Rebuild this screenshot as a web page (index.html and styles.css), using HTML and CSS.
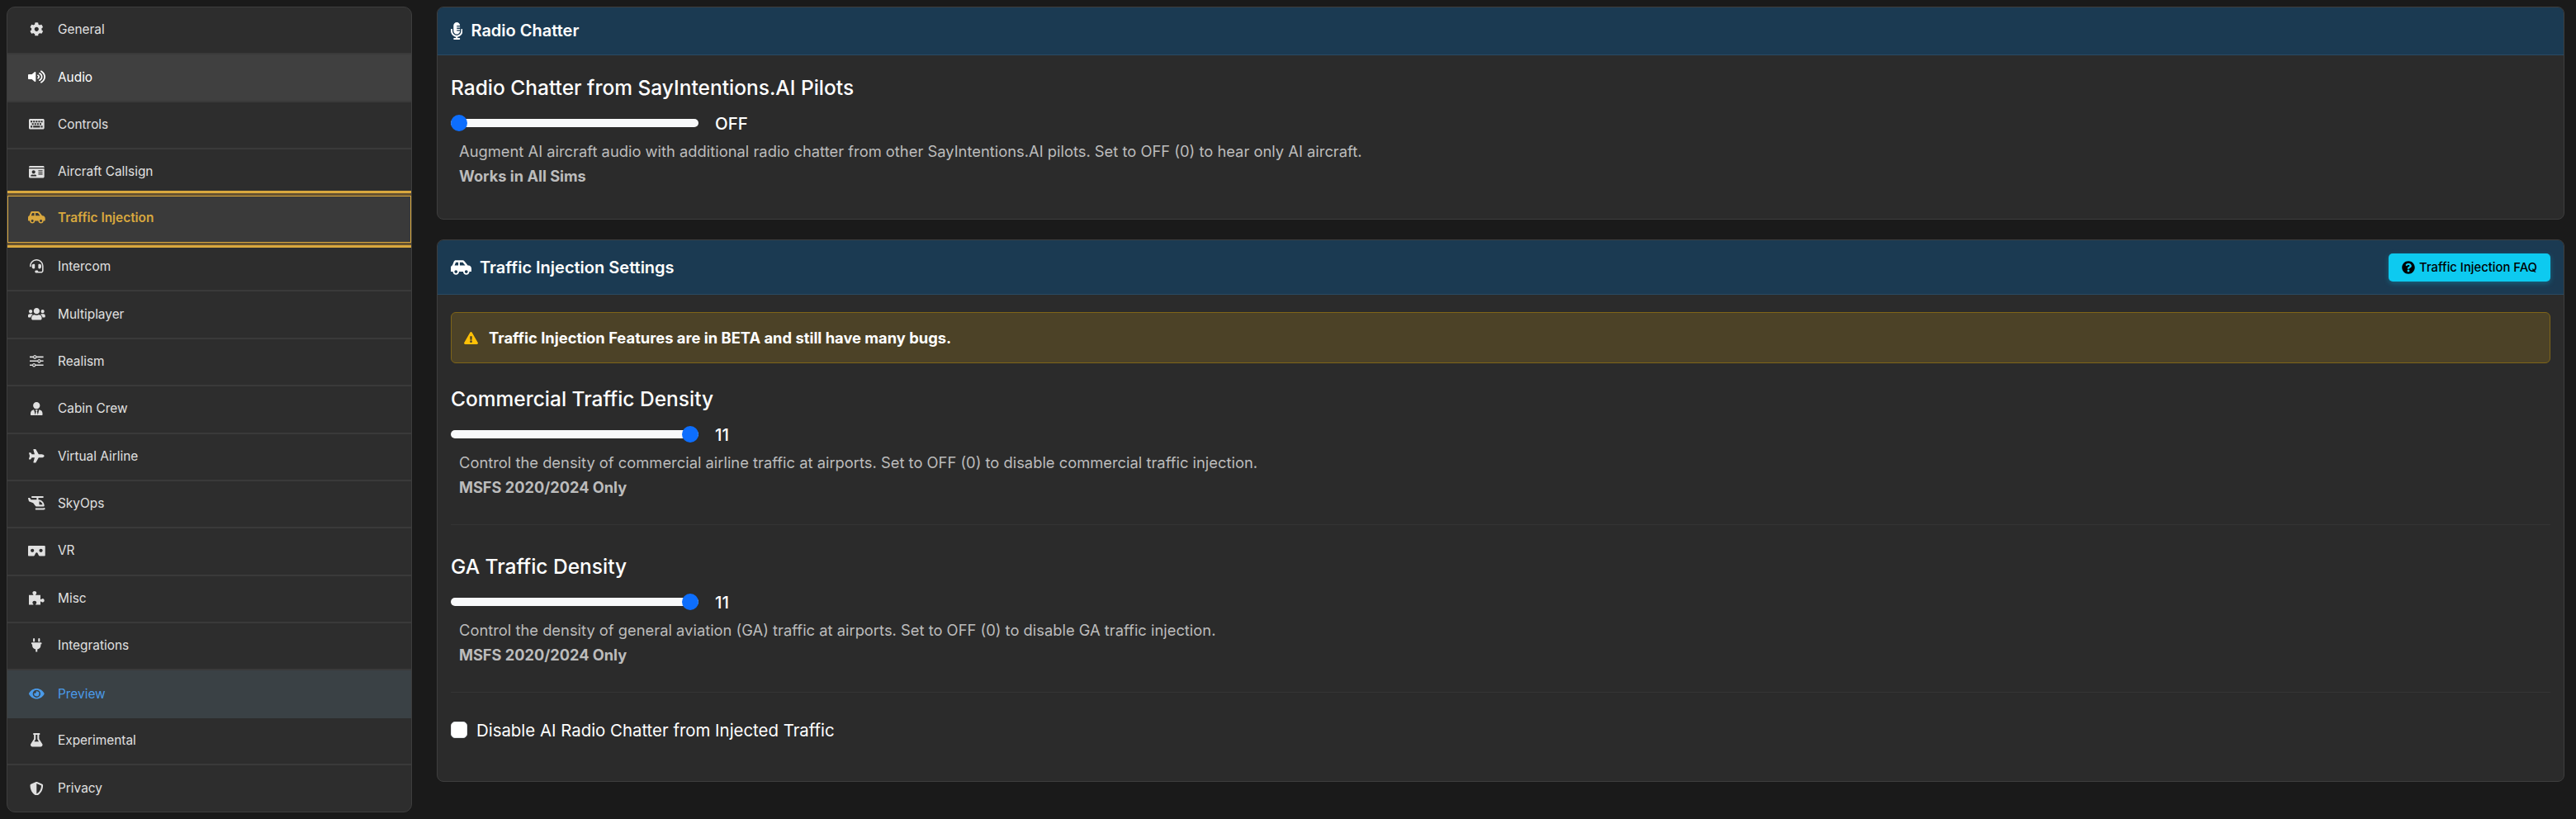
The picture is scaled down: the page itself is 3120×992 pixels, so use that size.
FILE: index.html
```html
<!DOCTYPE html>
<html lang="en">
<head>
<meta charset="utf-8">
<title>Settings</title>
<link rel="stylesheet" href="styles.css">
</head>
<body>
<nav class="sidebar">
  <a class="nav-item"><span class="nav-icon"><svg viewBox="0 0 512 512"><path d="M487.4 315.7l-42.6-24.6c4.3-23.2 4.3-47 0-70.2l42.6-24.6c4.9-2.8 7.1-8.6 5.5-14-11.1-35.6-30-67.8-54.7-94.6-3.8-4.1-10-5.1-14.8-2.3L380.8 110c-17.9-15.4-38.5-27.3-60.8-35.1V25.8c0-5.6-3.9-10.5-9.4-11.7-36.7-8.2-74.3-7.8-109.2 0-5.5 1.2-9.4 6.1-9.4 11.7V75c-22.2 7.9-42.8 19.8-60.8 35.1L88.7 85.5c-4.9-2.8-11-1.9-14.8 2.3-24.7 26.7-43.6 58.9-54.7 94.6-1.7 5.4.6 11.2 5.5 14L67.3 221c-4.3 23.2-4.3 47 0 70.2l-42.6 24.6c-4.9 2.8-7.1 8.6-5.5 14 11.1 35.6 30 67.8 54.7 94.6 3.8 4.1 10 5.1 14.8 2.3l42.6-24.6c17.9 15.4 38.5 27.3 60.8 35.1v49.2c0 5.6 3.9 10.5 9.4 11.7 36.7 8.2 74.3 7.8 109.2 0 5.5-1.2 9.4-6.1 9.4-11.7v-49.2c22.2-7.9 42.8-19.8 60.8-35.1l42.6 24.6c4.9 2.8 11 1.9 14.8-2.3 24.7-26.7 43.6-58.9 54.7-94.6 1.5-5.5-.7-11.3-5.6-14.1zM256 336c-44.1 0-80-35.9-80-80s35.9-80 80-80 80 35.9 80 80-35.9 80-80 80z"/></svg></span>General</a>
  <a class="nav-item nav-audio"><span class="nav-icon"><svg class="icon-wide" viewBox="0 0 576 512" preserveAspectRatio="none"><path d="M215.03 71.05L126.06 160H24c-13.26 0-24 10.74-24 24v144c0 13.25 10.74 24 24 24h102.06l88.97 88.95c15.03 15.03 40.97 4.47 40.97-16.97V88.02c0-21.46-25.96-31.98-40.97-16.97zm233.32-51.08c-11.17-7.33-26.18-4.24-33.51 6.95-7.34 11.17-4.22 26.18 6.95 33.51 66.27 43.49 105.82 116.6 105.82 195.58 0 78.98-39.55 152.09-105.82 195.58-11.17 7.32-14.29 22.34-6.95 33.5 7.04 10.71 21.93 14.56 33.51 6.95C528.27 439.58 576 351.33 576 256S528.27 72.43 448.35 19.97zM480 256c0-63.53-32.06-121.94-85.77-156.24-11.19-7.14-26.03-3.82-33.12 7.46s-3.78 26.21 7.41 33.36C408.27 165.97 432 209.11 432 256s-23.73 90.03-63.48 115.42c-11.19 7.14-14.5 22.07-7.41 33.36 6.51 10.36 21.12 15.14 33.12 7.46C447.94 377.94 480 319.53 480 256zm-141.77-76.87c-11.58-6.33-26.19-2.16-32.61 9.45-6.39 11.61-2.16 26.2 9.45 32.61C327.98 228.28 336 241.63 336 256c0 14.38-8.02 27.72-20.92 34.81-11.61 6.41-15.84 21-9.45 32.61 6.43 11.66 21.05 15.8 32.61 9.45 28.23-15.55 45.77-45 45.77-76.88s-17.54-61.32-45.78-76.86z"/></svg></span>Audio</a>
  <a class="nav-item"><span class="nav-icon"><svg viewBox="0 0 576 512"><path fill-rule="evenodd" d="M48 64h480c26.5 0 48 21.5 48 48v288c0 26.5-21.5 48-48 48H48c-26.5 0-48-21.5-48-48V112c0-26.5 21.5-48 48-48zM64 128v64h64v-64zm96 0v64h64v-64zm96 0v64h64v-64zm96 0v64h64v-64zm96 0v64h64v-64zM112 224v64h64v-64zm96 0v64h64v-64zm96 0v64h64v-64zm96 0v64h64v-64zM64 320v64h64v-64zm96 0v64h256v-64zm288 0v64h64v-64z"/></svg></span>Controls</a>
  <a class="nav-item"><span class="nav-icon"><svg viewBox="0 0 576 512"><path d="M528 32H48C21.5 32 0 53.5 0 80v16h576V80c0-26.5-21.5-48-48-48zM0 432c0 26.5 21.5 48 48 48h480c26.5 0 48-21.5 48-48V128H0v304zm352-232c0-4.4 3.6-8 8-8h144c4.4 0 8 3.6 8 8v16c0 4.4-3.6 8-8 8H360c-4.4 0-8-3.6-8-8v-16zm0 64c0-4.4 3.6-8 8-8h144c4.4 0 8 3.6 8 8v16c0 4.4-3.6 8-8 8H360c-4.4 0-8-3.6-8-8v-16zm0 64c0-4.4 3.6-8 8-8h144c4.4 0 8 3.6 8 8v16c0 4.4-3.6 8-8 8H360c-4.4 0-8-3.6-8-8v-16zM176 192c35.3 0 64 28.7 64 64s-28.7 64-64 64-64-28.7-64-64 28.7-64 64-64zM67.1 396.2C75.5 370.5 99.6 352 128 352h8.2c12.3 5.1 25.7 8 39.8 8s27.6-2.9 39.8-8h8.2c28.4 0 52.5 18.5 60.9 44.2 3.2 9.9-5.2 19.8-15.6 19.8H82.7c-10.4 0-18.8-10-15.6-19.8z"/></svg></span>Aircraft Callsign</a>
  <a class="nav-item nav-active"><span class="nav-icon"><svg viewBox="0 0 640 512"><path d="M544 192h-16L419.22 56.02A64.025 64.025 0 0 0 369.24 32H155.33c-26.17 0-49.7 15.93-59.42 40.23L48 194.26C20.44 201.4 0 226.21 0 256v112c0 8.84 7.16 16 16 16h48c0 53.02 42.98 96 96 96s96-42.98 96-96h128c0 53.02 42.98 96 96 96s96-42.98 96-96h48c8.84 0 16-7.16 16-16v-80c0-53.02-42.98-96-96-96zM160 432c-26.47 0-48-21.53-48-48s21.53-48 48-48 48 21.53 48 48-21.53 48-48 48zm72-240H116.93l38.4-96H232v96zm48 0V96h89.24l76.8 96H280zm200 240c-26.47 0-48-21.53-48-48s21.53-48 48-48 48 21.53 48 48-21.53 48-48 48z"/></svg></span>Traffic Injection</a>
  <a class="nav-item"><span class="nav-icon"><svg viewBox="0 0 512 512"><path d="M192 208c0-17.67-14.33-32-32-32h-16c-35.35 0-64 28.65-64 64v48c0 35.35 28.65 64 64 64h16c17.67 0 32-14.33 32-32V208zm176 144c35.35 0 64-28.65 64-64v-48c0-35.35-28.65-64-64-64h-16c-17.67 0-32 14.33-32 32v112c0 17.67 14.33 32 32 32h16zM256 0C113.18 0 4.58 118.83 0 256v16c0 8.84 7.16 16 16 16h16c8.84 0 16-7.16 16-16v-16c0-114.69 93.31-208 208-208s208 93.31 208 208h-.12c.08 2.43.12 165.72.12 165.72 0 23.35-18.93 42.28-42.28 42.28H320c0-26.51-21.49-48-48-48h-32c-26.51 0-48 21.49-48 48s21.49 48 48 48h181.72c49.86 0 90.28-40.42 90.28-90.28V256C507.42 118.83 398.82 0 256 0z"/></svg></span>Intercom</a>
  <a class="nav-item"><span class="nav-icon"><svg viewBox="0 0 640 512"><path d="M96 224c35.3 0 64-28.7 64-64s-28.7-64-64-64-64 28.7-64 64 28.7 64 64 64zm448 0c35.3 0 64-28.7 64-64s-28.7-64-64-64-64 28.7-64 64 28.7 64 64 64zm32 32h-64c-17.6 0-33.5 7.1-45.1 18.6 40.3 22.1 68.9 62 75.1 109.4h66c17.7 0 32-14.3 32-32v-32c0-35.3-28.7-64-64-64zm-256 0c61.9 0 112-50.1 112-112S381.9 32 320 32 208 82.1 208 144s50.1 112 112 112zm76.8 32h-8.3c-20.8 10-43.9 16-68.5 16s-47.6-6-68.5-16h-8.3C179.6 288 128 339.6 128 403.2V432c0 26.5 21.5 48 48 48h288c26.5 0 48-21.5 48-48v-28.8c0-63.6-51.6-115.2-115.2-115.2zm-223.7-13.4C161.5 263.1 145.6 256 128 256H64c-35.3 0-64 28.7-64 64v32c0 17.7 14.3 32 32 32h65.9c6.3-47.4 34.9-87.3 75.2-109.4z"/></svg></span>Multiplayer</a>
  <a class="nav-item"><span class="nav-icon"><svg viewBox="0 0 512 512"><path fill-rule="evenodd" d="M0 80h130a64 64 0 0 1 124 0h258v48H254a64 64 0 0 1-124 0H0zm192-8a32 32 0 1 0 0 64 32 32 0 0 0 0-64zM0 232h290a64 64 0 0 1 124 0h98v48h-98a64 64 0 0 1-124 0H0zm352-8a32 32 0 1 0 0 64 32 32 0 0 0 0-64zM0 384h98a64 64 0 0 1 124 0h290v48H222a64 64 0 0 1-124 0H0zm160-8a32 32 0 1 0 0 64 32 32 0 0 0 0-64z"/></svg></span>Realism</a>
  <a class="nav-item"><span class="nav-icon"><svg viewBox="0 0 448 512"><path d="M224 256c70.7 0 128-57.3 128-128S294.7 0 224 0 96 57.3 96 128s57.3 128 128 128zm95.8 32.6L272 480l-32-136 32-56h-96l32 56-32 136-47.8-191.4C56.9 292 0 350.3 0 422.4V464c0 26.5 21.5 48 48 48h352c26.5 0 48-21.5 48-48v-41.6c0-72.1-56.9-130.4-128.2-133.8z"/></svg></span>Cabin Crew</a>
  <a class="nav-item"><span class="nav-icon"><svg viewBox="0 0 576 512"><path d="M480 192H365.71L260.61 8.06A16.014 16.014 0 0 0 246.71 0h-65.5c-10.63 0-18.3 10.17-15.38 20.39L214.86 192H112l-43.2-57.6c-3.02-4.03-7.77-6.4-12.8-6.4H16.01C5.6 128-2.04 137.78.49 147.88L32 256 .49 364.12C-2.04 374.22 5.6 384 16.01 384H56c5.04 0 9.78-2.37 12.8-6.4L112 320h102.86l-49.03 171.6c-2.92 10.22 4.75 20.4 15.38 20.4h65.5c5.74 0 11.04-3.08 13.89-8.06L365.71 320H480c35.35 0 96-28.65 96-64s-60.65-64-96-64z"/></svg></span>Virtual Airline</a>
  <a class="nav-item"><span class="nav-icon"><svg viewBox="0 0 640 512"><path d="M304 384h272c17.67 0 32-14.33 32-32 0-123.71-100.29-224-224-224V64h176c8.84 0 16-7.16 16-16V16c0-8.84-7.16-16-16-16H144c-8.84 0-16 7.16-16 16v32c0 8.84 7.16 16 16 16h176v64H112L68.8 70.4C65.78 66.37 61.03 64 56 64H16.01C5.6 64-2.04 73.78.49 83.88L32 192l160 64 86.4 115.2A31.992 31.992 0 0 0 304 384zm112-188.49C478.55 208.3 528.03 257.44 540.79 320H416V195.51zm219.37 263.3l-22.15-22.2c-6.25-6.27-16.2-5.52-23.07.1-7.33 6-16.18 9.29-25.57 9.29H288c-8.84 0-16 7.16-16 16v32c0 8.84 7.16 16 16 16h276.58c14.38 0 28.32-3.32 41.09-9.37 5.99-2.84 24.28-15.15 29.35-22.3 4.58-6.45 4.62-14.26-.65-19.52z"/></svg></span>SkyOps</a>
  <a class="nav-item"><span class="nav-icon"><svg viewBox="0 0 640 512"><path d="M608 64H32C14.33 64 0 78.33 0 96v320c0 17.67 14.33 32 32 32h160.22c25.19 0 48.03-14.77 58.36-37.74l27.74-61.64C286.21 331.08 302.35 320 320 320s33.79 11.08 41.68 28.62l27.74 61.64C399.75 433.23 422.6 448 447.78 448H608c17.67 0 32-14.33 32-32V96c0-17.67-14.33-32-32-32zM160 304c-35.35 0-64-28.65-64-64s28.65-64 64-64 64 28.65 64 64-28.65 64-64 64zm320 0c-35.35 0-64-28.65-64-64s28.65-64 64-64 64 28.65 64 64-28.65 64-64 64z"/></svg></span>VR</a>
  <a class="nav-item"><span class="nav-icon"><svg viewBox="0 0 576 512"><path d="M0 150H150C170 150 175 130 160 115C140 95 135 80 135 60C135 25 170 0 210 0C250 0 285 25 285 60C285 80 280 95 260 115C245 130 250 150 270 150H432V290C432 310 450 315 465 300C485 280 500 275 520 275C555 275 576 310 576 350C576 390 555 420 520 420C500 420 485 415 465 395C450 380 432 385 432 405V512H270C250 512 245 495 260 480C280 460 285 445 285 425C285 390 250 365 210 365C170 365 135 390 135 425C135 445 140 460 160 480C175 495 170 512 150 512H0Z"/></svg></span>Misc</a>
  <a class="nav-item"><span class="nav-icon"><svg viewBox="0 0 384 512"><path d="M320,32a32,32,0,0,0-64,0v96h64Zm48,128H16A16,16,0,0,0,0,176v32a16,16,0,0,0,16,16H32v32A160.07,160.07,0,0,0,160,412.8V512h64V412.8A160.07,160.07,0,0,0,352,256V224h16a16,16,0,0,0,16-16V176A16,16,0,0,0,368,160ZM128,32a32,32,0,0,0-64,0v96h64Z"/></svg></span>Integrations</a>
  <a class="nav-item nav-preview"><span class="nav-icon"><svg viewBox="0 0 576 512"><path d="M572.52 241.4C518.29 135.59 410.93 64 288 64S57.68 135.64 3.48 241.41a32.35 32.35 0 0 0 0 29.19C57.71 376.41 165.07 448 288 448s230.32-71.64 284.52-177.41a32.35 32.35 0 0 0 0-29.19zM288 400a144 144 0 1 1 144-144 143.93 143.93 0 0 1-144 144zm0-240a95.31 95.31 0 0 0-25.31 3.79 47.85 47.85 0 0 1-66.9 66.9A95.78 95.78 0 1 0 288 160z"/></svg></span>Preview</a>
  <a class="nav-item"><span class="nav-icon"><svg viewBox="0 0 448 512"><path d="M437.2 403.5L320 215V64h8c13.3 0 24-10.7 24-24V24c0-13.3-10.7-24-24-24H120c-13.3 0-24 10.7-24 24v16c0 13.3 10.7 24 24 24h8v151L10.8 403.5C-18.5 450.6 15.3 512 70.9 512h306.2c55.7 0 89.4-61.5 60.1-108.5zM137.9 320l48.2-77.6c3.7-5.2 5.8-11.6 5.8-18.4V64h64v160c0 6.9 2.2 13.2 5.8 18.4l48.2 77.6h-172z"/></svg></span>Experimental</a>
  <a class="nav-item nav-last"><span class="nav-icon"><svg viewBox="0 0 512 512"><path d="M466.5 83.7l-192-80a48.15 48.15 0 0 0-36.9 0l-192 80C27.7 91.1 16 108.6 16 128c0 198.5 114.5 335.7 221.5 380.3 11.8 4.9 25.1 4.9 36.9 0C360.1 472.6 496 349.3 496 128c0-19.4-11.7-36.9-29.5-44.3zM256.1 446.3l-.1-381 175.9 73.3c-3.3 151.4-82.1 261.1-175.8 307.7z"/></svg></span>Privacy</a>
</nav>

<main class="content">
  <section class="card">
    <header class="card-header">
      <h2 class="card-title"><svg class="title-icon title-icon-mic" viewBox="0 0 352 512"><path d="M336 192h-16c-8.84 0-16 7.16-16 16v48c0 74.8-64.49 134.82-140.79 127.38C96.71 376.89 48 317.11 48 250.3V208c0-8.84-7.16-16-16-16H16c-8.84 0-16 7.16-16 16v40.16c0 89.64 63.97 169.55 152 181.69V464H96c-8.84 0-16 7.16-16 16v16c0 8.84 7.16 16 16 16h160c8.84 0 16-7.16 16-16v-16c0-8.84-7.16-16-16-16h-56v-33.77C285.71 418.47 352 344.9 352 256v-48c0-8.84-7.16-16-16-16zM176 352c53.02 0 96-42.98 96-96h-85.33c-5.89 0-10.67-3.58-10.67-8v-16c0-4.42 4.78-8 10.67-8H272v-32h-85.33c-5.89 0-10.67-3.58-10.67-8v-16c0-4.42 4.78-8 10.67-8H272v-32h-85.33c-5.89 0-10.67-3.58-10.67-8v-16c0-4.42 4.78-8 10.67-8H272c0-53.02-42.98-96-96-96S80 42.98 80 96v160c0 53.02 42.98 96 96 96z"/></svg>Radio Chatter</h2>
    </header>
    <div class="card-body">
      <div class="setting setting-plain">
        <h3 class="setting-title">Radio Chatter from SayIntentions.AI Pilots</h3>
        <div class="slider-row"><input class="slider" type="range" min="0" max="11" value="0"><span class="slider-value">OFF</span></div>
        <p class="setting-desc">Augment AI aircraft audio with additional radio chatter from other SayIntentions.AI pilots. Set to OFF (0) to hear only AI aircraft.</p>
        <p class="setting-note">Works in All Sims</p>
      </div>
    </div>
  </section>

  <section class="card">
    <header class="card-header card-header-action">
      <h2 class="card-title"><svg class="title-icon" viewBox="0 0 640 512"><path d="M544 192h-16L419.22 56.02A64.025 64.025 0 0 0 369.24 32H155.33c-26.17 0-49.7 15.93-59.42 40.23L48 194.26C20.44 201.4 0 226.21 0 256v112c0 8.84 7.16 16 16 16h48c0 53.02 42.98 96 96 96s96-42.98 96-96h128c0 53.02 42.98 96 96 96s96-42.98 96-96h48c8.84 0 16-7.16 16-16v-80c0-53.02-42.98-96-96-96zM160 432c-26.47 0-48-21.53-48-48s21.53-48 48-48 48 21.53 48 48-21.53 48-48 48zm72-240H116.93l38.4-96H232v96zm48 0V96h89.24l76.8 96H280zm200 240c-26.47 0-48-21.53-48-48s21.53-48 48-48 48 21.53 48 48-21.53 48-48 48z"/></svg>Traffic Injection Settings</h2>
      <a class="faq-button"><svg class="faq-icon" viewBox="0 0 512 512"><path d="M504 256c0 136.997-111.043 248-248 248S8 392.997 8 256C8 119.083 119.043 8 256 8s248 111.083 248 248zM262.655 90c-54.497 0-89.255 22.957-116.549 63.758-3.536 5.286-2.353 12.415 2.715 16.258l34.699 26.31c5.205 3.947 12.621 3.008 16.665-2.122 17.864-22.658 30.113-35.797 57.303-35.797 20.429 0 45.698 13.148 45.698 32.958 0 14.976-12.363 22.667-32.534 33.976C247.128 238.528 216 254.941 216 296v4c0 6.627 5.373 12 12 12h56c6.627 0 12-5.373 12-12v-1.333c0-28.462 83.186-29.647 83.186-106.667 0-58.002-60.165-102-116.531-102zM256 338c-25.365 0-46 20.635-46 46 0 25.364 20.635 46 46 46s46-20.636 46-46c0-25.365-20.635-46-46-46z"/></svg>Traffic Injection FAQ</a>
    </header>
    <div class="card-body">
      <div class="alert"><svg class="alert-icon" viewBox="0 0 576 512"><path d="M569.517 440.013C587.975 472.007 564.806 512 527.94 512H48.054c-36.937 0-59.999-40.055-41.577-71.987L246.423 24c18.467-32.009 64.72-31.951 83.154 0l239.94 416.013zM288 354c-25.405 0-46 20.595-46 46s20.595 46 46 46 46-20.595 46-46-20.595-46-46-46zm-43.673-165.346l7.418 136c.347 6.364 5.609 11.346 11.982 11.346h48.546c6.373 0 11.635-4.982 11.982-11.346l7.418-136c.375-6.874-5.098-12.654-11.982-12.654h-63.383c-6.884 0-12.356 5.78-11.981 12.654z"/></svg><strong>Traffic Injection Features are in BETA and still have many bugs.</strong></div>
      <div class="setting">
        <h3 class="setting-title">Commercial Traffic Density</h3>
        <div class="slider-row"><input class="slider" type="range" min="0" max="11" value="11"><span class="slider-value">11</span></div>
        <p class="setting-desc">Control the density of commercial airline traffic at airports. Set to OFF (0) to disable commercial traffic injection.</p>
        <p class="setting-note">MSFS 2020/2024 Only</p>
      </div>
      <div class="setting">
        <h3 class="setting-title">GA Traffic Density</h3>
        <div class="slider-row"><input class="slider" type="range" min="0" max="11" value="11"><span class="slider-value">11</span></div>
        <p class="setting-desc">Control the density of general aviation (GA) traffic at airports. Set to OFF (0) to disable GA traffic injection.</p>
        <p class="setting-note">MSFS 2020/2024 Only</p>
      </div>
      <label class="check-row"><input class="check" type="checkbox"><span>Disable AI Radio Chatter from Injected Traffic</span></label>
    </div>
  </section>
</main>
</body>
</html>
```

FILE: styles.css
```css
* {
  box-sizing: border-box;
}

html,
body {
  height: 100%;
}

body {
  margin: 0;
  padding: 8px 14px 8px 8px;
  display: flex;
  gap: 30px;
  background: #1a1a1a;
  color: #fff;
  font-family: Inter, "Liberation Sans", sans-serif;
  overflow: hidden;
}

.sidebar {
  flex: 0 0 491px;
  display: grid;
  grid-auto-rows: 57.4px;
  align-content: start;
  background: #2d2d2d;
  border: 1px solid #3e3e3e;
  border-radius: 10px;
  overflow: hidden;
}

.nav-item {
  display: flex;
  align-items: center;
  padding: 0 0 2px 25px;
  font-size: 15.4px;
  color: #e0e0e0;
  border-bottom: 2px solid #3a3a3a;
}

.nav-last {
  border-bottom: 0;
}

.nav-icon {
  flex: 0 0 21px;
  height: 17px;
  margin-right: 15px;
  display: flex;
  align-items: center;
  justify-content: center;
}

.nav-icon svg {
  height: 16.6px;
  fill: currentColor;
  display: block;
}

.nav-icon .icon-wide {
  width: 21px;
  height: 16px;
}

.nav-audio {
  background: #404040;
  color: #fff;
}

.nav-active {
  position: relative;
  z-index: 1;
  margin: -1.5px 0 1.5px;
  background: #3a3a3a;
  color: #d9a83e;
  font-weight: 600;
  border: 1px solid #d9a83e;
  padding: 0 0 4px 24px;
  box-shadow: 0 0 0 3px #665230, 0 0 0 6px #d9a83e;
}

.nav-preview {
  background: #3a4145;
  color: #4a9ae8;
  border-bottom: 0;
}

.content {
  flex: 1 1 0;
  min-width: 0;
  display: flex;
  flex-direction: column;
  align-items: stretch;
  gap: 24px;
}

.card {
  background: #2b2b2b;
  border: 1px solid #3e3e3e;
  border-radius: 8px;
  overflow: hidden;
}

.card-header {
  display: flex;
  align-items: center;
  justify-content: space-between;
  height: 58px;
  padding: 0 16px 1px;
  background: #1b3a52;
  border-bottom: 1px solid #2a4a63;
}

.card-header-action {
  height: 66px;
  padding-bottom: 0;
}

.card-title {
  margin: 0;
  display: flex;
  align-items: center;
  font-size: 20px;
  font-weight: 600;
  line-height: 30px;
}

.title-icon {
  height: 20px;
  margin-right: 10px;
  fill: currentColor;
}

.title-icon-mic {
  height: 21px;
}

.faq-button {
  display: flex;
  align-items: center;
  height: 34px;
  padding: 0 16px;
  background: #0dcaf0;
  color: #000;
  font-size: 14.8px;
  font-weight: 500;
  border-radius: 5px;
  box-shadow: 0 2px 6px rgba(13, 202, 240, 0.3);
}

.faq-icon {
  width: 16px;
  height: 16px;
  margin-right: 5px;
  fill: currentColor;
}

.card-body {
  padding: 20px 16px 8px;
}

.alert {
  display: flex;
  align-items: center;
  height: 62px;
  padding: 0 15px;
  margin-top: 1px;
  margin-bottom: 24px;
  background: #4c4227;
  border: 1px solid #7f6518;
  border-radius: 6px;
  font-size: 18.35px;
}

.alert strong {
  font-weight: 700;
}

.alert-icon {
  width: 17px;
  height: 15px;
  margin-right: 13px;
  fill: #ffc107;
}

.setting {
  padding: 4px 0 30px;
  margin-bottom: 31px;
  border-bottom: 1px solid #343434;
}

.setting-plain {
  padding-bottom: 29px;
  margin-bottom: 0;
  border-bottom: 0;
}

.setting-title {
  margin: 0 0 13px;
  font-size: 24.5px;
  font-weight: 500;
  line-height: 31px;
}

.slider-row {
  display: flex;
  align-items: center;
  height: 28px;
  margin-bottom: 6px;
}

.slider {
  appearance: none;
  -webkit-appearance: none;
  width: 300px;
  height: 20px;
  margin: 0 20px 0 0;
  background: transparent;
}

.slider::-webkit-slider-runnable-track {
  height: 10px;
  background: #f8f9fa;
  border-radius: 5px;
}

.slider::-webkit-slider-thumb {
  -webkit-appearance: none;
  width: 20px;
  height: 20px;
  margin-top: -5px;
  border-radius: 50%;
  background: #0d6efd;
}

.slider-value {
  font-size: 20.4px;
  font-weight: 500;
}

.setting-desc,
.setting-note {
  margin: 0 0 0 10px;
  font-size: 18.35px;
  line-height: 29.5px;
  color: #bcbcbc;
}

.setting-note {
  font-weight: 700;
  font-size: 18.2px;
}

.check-row {
  display: flex;
  align-items: center;
  height: 28px;
  margin-top: 1px;
  margin-bottom: 40px;
  font-size: 20.4px;
}

.check {
  appearance: none;
  -webkit-appearance: none;
  width: 20px;
  height: 20px;
  margin: 0 11px 0 0;
  background: #fff;
  border: 1px solid #dee2e6;
  border-radius: 5px;
}
```
